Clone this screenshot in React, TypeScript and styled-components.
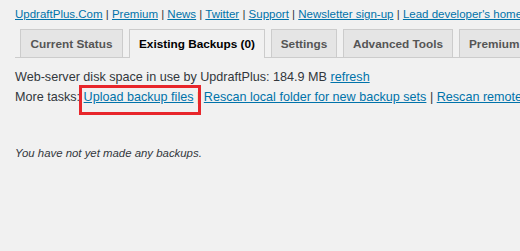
import React from "react";
import styled, { createGlobalStyle } from "styled-components";

const Global = createGlobalStyle`
  html, body { margin: 0; padding: 0; background: #f1f1f1; }
  body { font-family: "Liberation Sans", Arial, sans-serif; color: #32373c; overflow: hidden; }
`;

const Page = styled.div`
  width: 520px;
  height: 251px;
  overflow: hidden;
  padding-left: 15px;
  box-sizing: border-box;
  white-space: nowrap;
`;

const LinksRow = styled.div`
  font-size: 11.5px;
  line-height: 17px;
  padding-top: 6px;
  color: #32373c;
`;

const Link = styled.a`
  color: #0073aa;
  text-decoration: underline;
  cursor: pointer;
`;

const TabBar = styled.div`
  display: flex;
  margin-top: 6px;
  padding-left: 5px;
  border-bottom: 1px solid #ccc;
  width: 620px;
`;

const Tab = styled.div<{ $active?: boolean; $w?: number }>`
  flex: none;
  display: flex;
  align-items: center;
  justify-content: center;
  box-sizing: border-box;
  width: ${(p) => (p.$w ? `${p.$w}px` : "auto")};
  height: ${(p) => (p.$active ? 29 : 28)}px;
  margin-bottom: ${(p) => (p.$active ? -1 : 0)}px;
  margin-right: 6px;
  padding: 0 9px ${(p) => (p.$active ? 1 : 0)}px;
  border: 1px solid #ccc;
  border-bottom: none;
  background: ${(p) => (p.$active ? "#f1f1f1" : "#e5e5e5")};
  color: ${(p) => (p.$active ? "#000" : "#555")};
  font-size: 11.8px;
  font-weight: 700;
`;

const Body = styled.div`
  padding-top: 9px;
  font-size: 12.6px;
  line-height: 20px;
`;

const Line = styled.div`
  white-space: nowrap;
`;

const Highlight = styled.span`
  position: relative;
  display: inline-block;
`;

const RedBox = styled.span`
  position: absolute;
  left: -5px;
  right: -7px;
  top: -2px;
  bottom: -8px;
  border: 3px solid #e8262b;
  pointer-events: none;
  z-index: 2;
`;

const Empty = styled.p`
  margin: 38px 0 0;
  font-size: 11.4px;
  line-height: 16px;
  font-style: italic;
  color: #32373c;
`;

export default function App() {
  return (
    <>
      <Global />
      <Page>
        <LinksRow>
          <Link>UpdraftPlus.Com</Link> | <Link>Premium</Link> | <Link>News</Link> |{" "}
          <Link>Twitter</Link> | <Link>Support</Link> | <Link>Newsletter sign-up</Link> |{" "}
          <Link>Lead developer's homepage</Link>
        </LinksRow>
        <TabBar>
          <Tab $w={103}>Current Status</Tab>
          <Tab $active $w={136}>Existing Backups (0)</Tab>
          <Tab $w={66}>Settings</Tab>
          <Tab $w={110}>Advanced Tools</Tab>
          <Tab>Premium / Extensions</Tab>
        </TabBar>
        <Body>
          <Line>
            Web-server disk space in use by UpdraftPlus: 184.9 MB <Link>refresh</Link>
          </Line>
          <Line>
            More tasks:{" "}
            <Highlight>
              <Link>Upload backup files</Link>
              <RedBox />
            </Highlight>{" "}
            | <Link>Rescan local folder for new backup sets</Link> |{" "}
            <Link>Rescan remote storage</Link>
          </Line>
          <Empty>You have not yet made any backups.</Empty>
        </Body>
      </Page>
    </>
  );
}
